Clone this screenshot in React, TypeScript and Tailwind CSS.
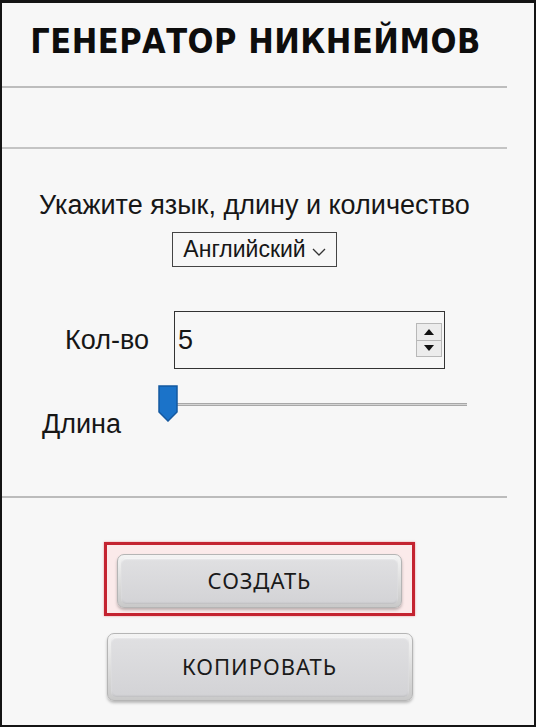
import React from 'react';

const BevelButton = ({ label }: { label: string }) => (
  <div className="w-full h-full rounded-[7px] border border-[#b5b5b5] bg-gradient-to-b from-[#f4f4f4] to-[#c9c9c9] p-[3px] shadow-[0_2px_3px_rgba(0,0,0,0.25)]">
    <div className="w-full h-full rounded-[5px] bg-gradient-to-b from-[#e0e0e2] to-[#d3d3d6] shadow-[inset_0_1px_2px_rgba(255,255,255,0.9),inset_0_-1px_2px_rgba(0,0,0,0.12)] flex items-center justify-center">
      <span className="font-['Noto_Sans',sans-serif] text-[22px] tracking-[1px] text-[#1a1a1a]">{label}</span>
    </div>
  </div>
);

const Spinner = () => (
  <div className="flex flex-col w-[26px] h-[34px] border border-[#b8b8b8] bg-[#ececec]">
    <div className="flex-1 flex items-center justify-center border-b border-[#b8b8b8]">
      <svg width="10" height="6" viewBox="0 0 10 6"><path d="M5 0L10 6H0Z" fill="#111" /></svg>
    </div>
    <div className="flex-1 flex items-center justify-center">
      <svg width="10" height="6" viewBox="0 0 10 6"><path d="M0 0H10L5 6Z" fill="#111" /></svg>
    </div>
  </div>
);

const App = () => {
  return (
    <div className="w-[536px] h-[728px] bg-white">
      <div className="h-[727px] border-t-[3px] border-l-2 border-r-2 border-b-2 border-[#141414] bg-[#f7f7f7] flex flex-col">
        <div className="w-[505px] flex flex-col">
          <div className="h-[83px] flex items-center justify-center pl-[2px] pb-[6px]">
            <h1 className="font-['DejaVu_Sans_Condensed','DejaVu_Sans',sans-serif] font-bold text-[34px] tracking-[0.5px] text-[#0d0d0d]">
              ГЕНЕРАТОР НИКНЕЙМОВ
            </h1>
          </div>
          <div className="h-[2px] bg-[#bdbdbd]" />
          <div className="h-[59px]" />
          <div className="h-[2px] bg-[#c4c4c4]" />

          <div className="flex flex-col items-center pt-[41px] font-['Liberation_Sans',Arial,sans-serif] text-[#161616]">
            <p className="text-[27px] leading-[30px]">Укажите язык, длину и количество</p>
            <div className="mt-[12px] h-[35px] px-[10px] border border-[#444] bg-[#f7f7f7] flex items-center gap-[6px]">
              <span className="text-[23px]">Английский</span>
              <svg width="14" height="8" viewBox="0 0 14 8" className="mt-[4px]">
                <path d="M1 1L7 7L13 1" fill="none" stroke="#333" strokeWidth="1.3" />
              </svg>
            </div>
          </div>

          <div className="flex items-center pt-[44px] font-['Liberation_Sans',Arial,sans-serif] text-[#161616]">
            <span className="w-[172px] pl-[63px] text-[27px]">Кол-во</span>
            <div className="w-[271px] h-[58px] border border-[#333] bg-[#f7f7f7] flex items-center justify-between pl-[3px] pr-[2px]">
              <span className="text-[27px]">5</span>
              <Spinner />
            </div>
          </div>

          <div className="flex items-start pt-[15px] font-['Liberation_Sans',Arial,sans-serif] text-[#161616]">
            <span className="w-[155px] pl-[40px] pt-[20px] text-[27px]">Длина</span>
            <div className="relative w-[310px] h-[40px]">
              <div className="absolute left-[18px] right-[0px] top-[19px] h-[3px] bg-[#d4d4d4] border-y border-[#a8a8a8]" />
              <svg className="absolute left-0 top-0" width="22" height="38" viewBox="0 0 22 38">
                <path d="M2 2H20V28L11 37L2 28Z" fill="#1b73c9" stroke="#1559a0" strokeWidth="1.5" />
              </svg>
            </div>
          </div>

          <div className="h-[51px]" />
          <div className="h-[2px] bg-[#bcbcbc]" />

          <div className="flex flex-col items-center pl-[10px] pt-[44px]">
            <div className="w-[311px] h-[74px] border-[3px] border-[#c42330] bg-[#fbeaea] px-[10px] pt-[9px] pb-[5px] shadow-[0_0_2px_rgba(220,60,60,0.5)]">
              <BevelButton label="СОЗДАТЬ" />
            </div>
            <div className="w-[306px] h-[68px] mt-[17px]">
              <BevelButton label="КОПИРОВАТЬ" />
            </div>
          </div>
        </div>
      </div>
    </div>
  );
};

export default App;
